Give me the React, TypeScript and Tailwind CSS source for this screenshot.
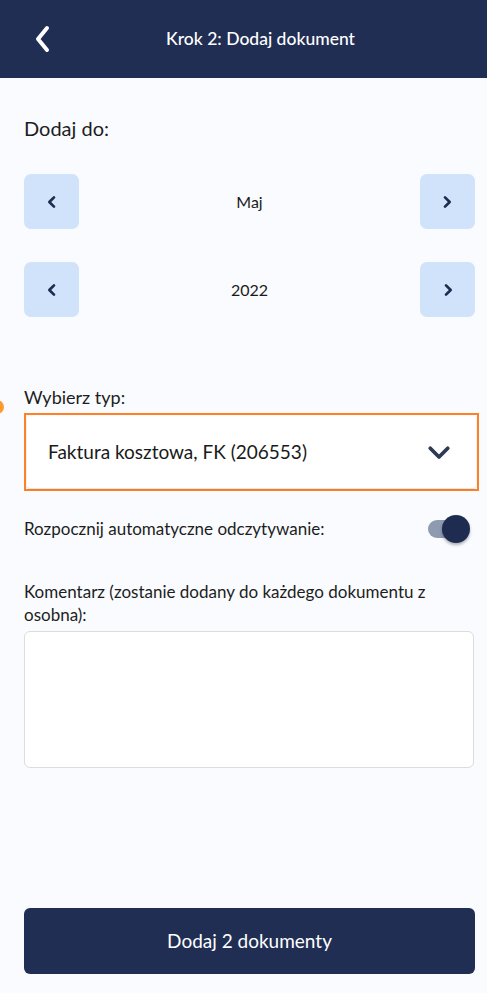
import React from "react";

const Chevron = ({ dir, className }: { dir: "left" | "right" | "down"; className?: string }) => {
  const d =
    dir === "left" ? "M15 5 L8 12 L15 19" : dir === "right" ? "M9 5 L16 12 L9 19" : "M5 9 L12 16 L19 9";
  return (
    <svg viewBox="0 0 24 24" className={className} fill="none" stroke="currentColor" strokeLinecap="round" strokeLinejoin="round">
      <path d={d} />
    </svg>
  );
};

const Stepper = ({ label }: { label: string }) => (
  <div className="flex items-center justify-between">
    <button className="w-[55px] h-[55px] rounded-[7px] bg-[#d1e2fb] flex items-center justify-center text-[#1e2b4f]">
      <Chevron dir="left" className="w-[16px] h-[16px] [stroke-width:4]" />
    </button>
    <span className="text-[16px] text-[#1a1a1a]">{label}</span>
    <button className="w-[55px] h-[55px] rounded-[7px] bg-[#d1e2fb] flex items-center justify-center text-[#1e2b4f]">
      <Chevron dir="right" className="w-[16px] h-[16px] [stroke-width:4]" />
    </button>
  </div>
);

export default function App() {
  return (
    <div className="relative w-[487px] h-[993px] bg-[#f9fbff] flex flex-col overflow-hidden" style={{ fontFamily: "Lato, 'Noto Sans', sans-serif" }}>
      <header className="h-[78px] bg-[#212e53] flex items-center pl-[30px] shrink-0">
        <svg viewBox="0 0 24 30" className="w-[24px] h-[30px] text-white" fill="none" stroke="currentColor" strokeWidth="4" strokeLinecap="round" strokeLinejoin="round">
          <path d="M17 4 L8 15 L17 26" />
        </svg>
        <div className="flex-1 text-center pr-[20px] text-white text-[17.5px] font-medium">Krok 2: Dodaj dokument</div>
      </header>

      <main className="flex-1 flex flex-col pl-[24px] pr-[8px]">
        <div className="pt-[37px] text-[20px] text-[#1d1d1d] leading-[26px]">Dodaj do:</div>
        <div className="mt-[33px] mr-[4px]">
          <Stepper label="Maj" />
        </div>
        <div className="mt-[33px] mr-[4px]">
          <Stepper label="2022" />
        </div>

        <div className="mt-[68px] text-[18px] text-[#1d1d1d] leading-[24px]">Wybierz typ:</div>
        <div className="mt-[4px] border-2 border-[#fe8126] p-[1px]">
          <div className="h-[72px] bg-white rounded-[3px] shadow-[0_1px_2px_rgba(0,0,0,0.12)] flex items-center justify-between pl-[21px] pr-[22px]">
            <span className="text-[19px] text-[#1a1a1a]">Faktura kosztowa, FK (206553)</span>
            <Chevron dir="down" className="w-[30px] h-[30px] text-[#2d3a55] [stroke-width:3]" />
          </div>
        </div>

        <div className="mt-[24px] flex items-center justify-between mr-[9px]">
          <span className="text-[17px] text-[#1d1d1d]">Rozpocznij automatyczne odczytywanie:</span>
          <div className="relative w-[43px] h-[28px] flex items-center">
            <div className="w-[34px] h-[18px] rounded-full bg-[#8e9ab0] ml-[1px]" />
            <div className="absolute right-0 top-0 w-[28px] h-[28px] rounded-full bg-[#1f2c51] shadow-[0_2px_3px_rgba(0,0,0,0.3)]" />
          </div>
        </div>

        <div className="mt-[37px] text-[17px] leading-[23px] text-[#1d1d1d] pr-[10px]">
          Komentarz (zostanie dodany do każdego dokumentu z osobna):
        </div>
        <div className="mt-[5px] mr-[5px] h-[137px] bg-white border border-[#dcdcdc] rounded-[6px]" />

        <div className="flex-1" />
        <button className="mb-[19px] mr-[4px] h-[66px] rounded-[6px] bg-[#212e53] text-white text-[19px]">
          Dodaj 2 dokumenty
        </button>
      </main>

      <div className="absolute left-[-10px] top-[400px] w-[14px] h-[14px] rounded-full bg-[#fe9a30]" />
    </div>
  );
}
